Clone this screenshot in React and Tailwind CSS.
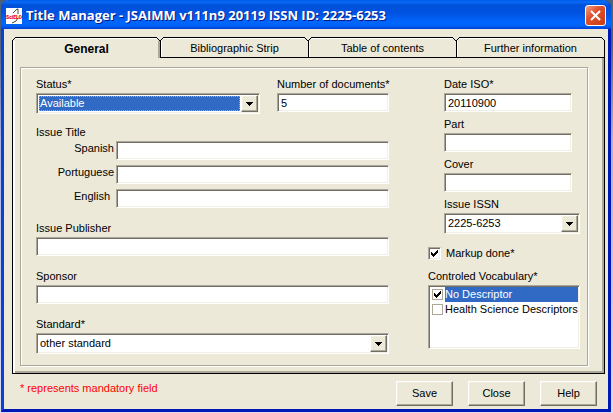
import React from "react";

const sunken =
  "border border-t-[#aca899] border-l-[#aca899] border-r-white border-b-white bg-white shadow-[inset_1px_1px_0_#716f64,inset_-1px_-1px_0_#f1efe2]";
const raised =
  "border border-t-white border-l-white border-r-[#716f64] border-b-[#716f64] bg-[#ece9d8] shadow-[inset_-1px_-1px_0_#aca899,inset_1px_1px_0_#f1efe2]";

function Label({ htmlFor, children, className = "" }) {
  return (
    <label htmlFor={htmlFor} className={`block h-4 leading-[14px] whitespace-nowrap ${className}`}>
      {children}
    </label>
  );
}

function TextField({ id, label, value = "", className = "" }) {
  return (
    <div className={className}>
      <Label htmlFor={id}>{label}</Label>
      <input id={id} type="text" defaultValue={value} className={`block h-[19px] w-full px-[3px] outline-none ${sunken}`} />
    </div>
  );
}

function SelectField({ id, label, options, selected = false, className = "" }) {
  return (
    <div className={className}>
      <Label htmlFor={id}>{label}</Label>
      <div className={`flex h-[21px] p-px ${sunken}`}>
        <div className="flex min-w-0 flex-1 p-px">
          <select
            id={id}
            className={`min-w-0 flex-1 appearance-none outline-none ${
              selected
                ? "border border-dotted border-[#e0a040] bg-[#316ac5] leading-[13px] text-white"
                : "bg-white pl-px leading-[15px]"
            }`}
          >
            {options.map((o) => (
              <option key={o}>{o}</option>
            ))}
          </select>
        </div>
        <span className={`pointer-events-none grid w-[17px] place-items-center ${raised}`}>
          <svg width="7" height="4" viewBox="0 0 7 4" shapeRendering="crispEdges" aria-hidden="true">
            <path d="M0 0h7v1H0zM1 1h5v1H1zM2 2h3v1H2zM3 3h1v1H3z" />
          </svg>
        </span>
      </div>
    </div>
  );
}

function TitleRow({ id, label, labelClass = "pr-0.5" }) {
  return (
    <div className="flex h-[19px]">
      <label htmlFor={id} className={`w-20 text-right leading-[14px] ${labelClass}`}>
        {label}
      </label>
      <input id={id} type="text" className={`min-w-0 flex-1 px-[3px] outline-none ${sunken}`} />
    </div>
  );
}

function Tick() {
  return (
    <svg
      className="pointer-events-none invisible col-start-1 row-start-1 peer-checked:visible"
      width="7"
      height="7"
      viewBox="0 0 7 7"
      shapeRendering="crispEdges"
      aria-hidden="true"
    >
      <path d="M0 2h1v3H0zM1 3h1v3H1zM2 4h1v3H2zM3 3h1v3H3zM4 2h1v3H4zM5 1h1v3H5zM6 0h1v3H6z" />
    </svg>
  );
}

function VocabularyItem({ id, label, checked = false, active = false }) {
  return (
    <div className="flex h-[15px]">
      <span className="grid w-[15px] shrink-0 place-items-center">
        <input
          id={id}
          type="checkbox"
          defaultChecked={checked}
          className="peer col-start-1 row-start-1 size-[11px] appearance-none border border-[#aca899] bg-white"
        />
        <Tick />
      </span>
      <label
        htmlFor={id}
        className={`min-w-0 flex-1 leading-[15px] whitespace-nowrap ${active ? "bg-[#316ac5] text-white" : ""}`}
      >
        {label}
      </label>
    </div>
  );
}

function Corner({ className }) {
  return (
    <svg
      className={`pointer-events-none absolute -top-px ${className}`}
      width="4"
      height="4"
      viewBox="0 0 4 4"
      shapeRendering="crispEdges"
      aria-hidden="true"
    >
      <path d="M0 0h4v4H0z" fill="#ece9d8" />
      <path d="M3 0h1v1H3zM2 1h1v1H2zM1 2h1v1H1zM0 3h1v1H0z" />
    </svg>
  );
}

function Tab({ label, active = false, last = false }) {
  return (
    <button
      type="button"
      role="tab"
      aria-selected={active}
      className={`relative flex-1 border-t border-l border-black ${
        active
          ? "pt-0.5 text-[12px] font-bold shadow-[inset_2px_1px_0_white,inset_-2px_0_0_#aca899]"
          : "border-b pt-px shadow-[inset_1px_1px_0_white]"
      } ${last ? "border-r" : ""}`}
    >
      {label}
      <Corner className="-left-px" />
      <Corner className={`-scale-x-100 ${last ? "-right-px" : "right-0"}`} />
    </button>
  );
}

function PushButton({ children }) {
  return (
    <button type="button" className={`h-[25px] w-[57px] ${raised}`}>
      {children}
    </button>
  );
}

export default function App() {
  return (
    <div className="min-h-screen bg-[linear-gradient(#4b6079,#4b6079_40px,#a9b2dc_140px,#dcdcf0)] pr-0.5 pb-px pl-px font-['Liberation_Sans',sans-serif] text-[11px] text-black">
      <main className="rounded-t-lg border-[3px] border-t-0 border-[#0a3fd8] border-r-[#0019b5] border-b-[#0019b5] bg-[#ece9d8]">
        <header className="-mx-[3px] flex h-[29px] items-center rounded-t-lg bg-[linear-gradient(#0058e6,#0a6cf8_2px,#0050d8_5px,#0054e3_14px,#0066ff_22px,#0062f5_26px,#003dd0)] pt-0.5 pr-[5px] pl-[5px]">
          <svg width="16" height="16" viewBox="0 0 16 16" aria-hidden="true" className="shrink-0">
            <path d="M0 0h16v16H0z" fill="white" />
            <path d="M7 5 11 1h1v5M12 10l-2 3-4 2" fill="none" stroke="#444" />
            <text x="8" y="11" textAnchor="middle" fontSize="5" fontWeight="900" fontFamily="Roboto" fill="#e80000">
              SciELO
            </text>
          </svg>
          <h1 className="ml-1 flex-1 truncate font-['Open_Sans',sans-serif] text-[13px] font-bold text-white [text-shadow:1px_1px_0_#0a1883]">
            Title Manager - JSAIMM v111n9 20119 ISSN ID: 2225-6253
          </h1>
          <button
            type="button"
            aria-label="Close window"
            className="grid size-[21px] shrink-0 place-items-center rounded-[3px] border border-white bg-[linear-gradient(135deg,#f0a088,#e0502c_40%,#c83c14)]"
          >
            <svg width="13" height="13" viewBox="0 0 13 13" aria-hidden="true">
              <path d="M2 2l9 9M11 2l-9 9" stroke="white" strokeWidth="2" />
            </svg>
          </button>
        </header>

        <div className="pt-2 pr-[3px] pb-[3px] pl-2">
          <div role="tablist" className="flex h-[21px]">
            <Tab label="General" active />
            <Tab label="Bibliographic Strip" />
            <Tab label="Table of contents" />
            <Tab label="Further information" last />
          </div>

          <section className="border border-t-0 border-black pt-[9px] pr-4 pb-[7px] pl-[7px] shadow-[inset_2px_0_0_white,inset_-2px_-2px_0_#aca899]">
            <div className="flex gap-[39px] border border-[#aca899] pt-[9px] pr-[7px] pb-[11px] pl-[15px] shadow-[inset_1px_1px_0_white,1px_1px_0_white]">
              <div className="min-w-0 flex-1">
                <div className="flex gap-[17px]">
                  <SelectField id="status" label="Status*" options={["Available"]} selected className="min-w-0 flex-[2]" />
                  <TextField id="documents" label="Number of documents*" value="5" className="min-w-0 flex-1" />
                </div>
                <fieldset className="mt-[11px]">
                  <legend className="block h-4 leading-[14px]">Issue Title</legend>
                  <div className="flex flex-col gap-[5px]">
                    <TitleRow id="spanish" label="Spanish" />
                    <TitleRow id="portuguese" label="Portuguese" />
                    <TitleRow id="english" label="English" labelClass="pr-1.5" />
                  </div>
                </fieldset>
                <TextField id="publisher" label="Issue Publisher" className="mt-[13px]" />
                <TextField id="sponsor" label="Sponsor" className="mt-[13px]" />
                <SelectField id="standard" label="Standard*" options={["other standard"]} className="mt-[13px]" />
              </div>

              <div className="w-[152px] shrink-0">
                <div className="flex flex-col gap-[5px] pl-4">
                  <TextField id="date" label="Date ISO*" value="20110900" className="pr-2" />
                  <TextField id="part" label="Part" className="pr-2" />
                  <TextField id="cover" label="Cover" className="pr-2" />
                  <SelectField id="issn" label="Issue ISSN" options={["2225-6253"]} />
                </div>
                <div className="mt-[13px] flex h-[13px] items-center">
                  <span className="grid place-items-center">
                    <input
                      id="markup"
                      type="checkbox"
                      defaultChecked
                      className={`peer col-start-1 row-start-1 size-[13px] appearance-none ${sunken}`}
                    />
                    <Tick />
                  </span>
                  <label htmlFor="markup" className="ml-[5px] leading-[13px]">
                    Markup done*
                  </label>
                </div>
                <div className="mt-[9px]" role="group" aria-labelledby="vocabulary">
                  <div id="vocabulary" className="h-4 leading-[14px]">
                    Controled Vocabulary*
                  </div>
                  <div className={`h-16 p-px ${sunken}`}>
                    <VocabularyItem id="none" label="No Descriptor" checked active />
                    <VocabularyItem id="health" label="Health Science Descriptors" />
                  </div>
                </div>
              </div>
            </div>
          </section>

          <footer className="flex gap-[15px] pt-[7px] pr-2 pl-2">
            <p className="flex-1 leading-[14px] text-[#ff0000]">* represents mandatory field</p>
            <PushButton>Save</PushButton>
            <PushButton>Close</PushButton>
            <PushButton>Help</PushButton>
          </footer>
        </div>
      </main>
    </div>
  );
}
